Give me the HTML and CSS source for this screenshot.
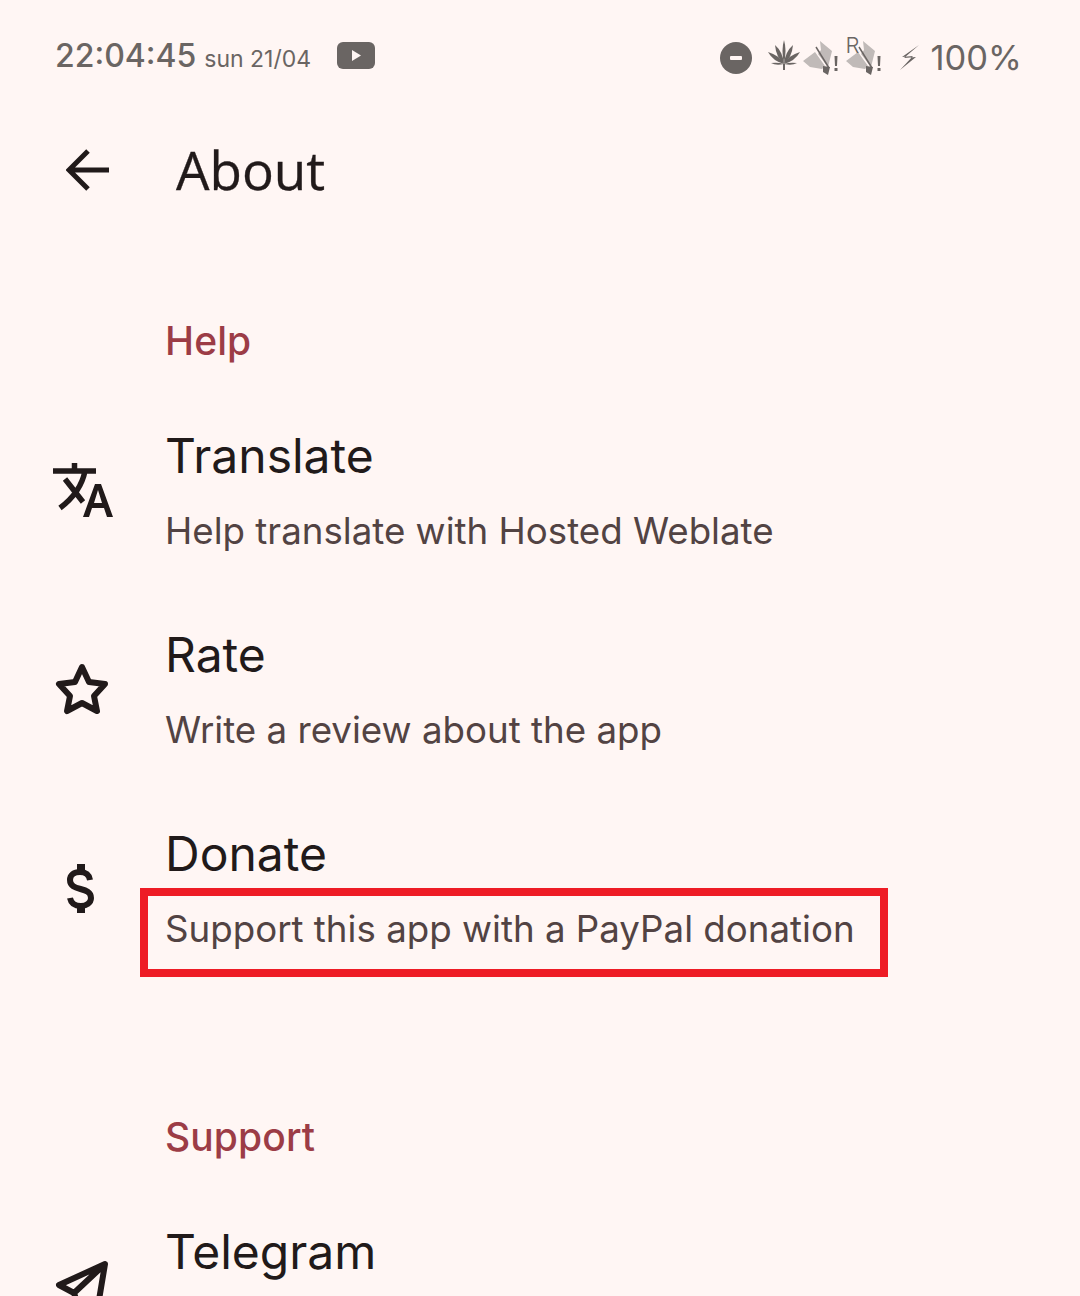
FILE: index.html
```html
<!DOCTYPE html>
<html lang="en">
<head>
<meta charset="utf-8">
<title>About</title>
<link rel="stylesheet" href="styles.css">
</head>
<body>
<div class="screen">
  <header class="status">
    <div class="status-left">
      <span class="clock">22:04:45</span>
      <span class="date">sun 21/04</span>
      <svg class="yt" viewBox="0 0 38 27"><rect width="38" height="27" rx="6" fill="#6a6563"/><path d="M15 8l9 5.500-9 5.500z" fill="#fff6f4"/></svg>
    </div>
    <div class="status-right">
      <svg class="dnd" viewBox="0 0 32 32"><circle cx="16" cy="16" r="16" fill="#6a6563"/><rect x="10" y="14" width="12" height="4" rx="1" fill="#fff6f4"/></svg>
      <svg class="leaf" viewBox="0 0 32 30"><g fill="#6a6563"><path d="M16 24Q13 10 16 0Q19 10 16 24z"/><path d="M16 24Q8 17 7 5Q15 12 16 24z"/><path d="M16 24Q24 17 25 5Q17 12 16 24z"/><path d="M16 24Q5 21 0 12Q11 15 16 24z"/><path d="M16 24Q27 21 32 12Q21 15 16 24z"/><path d="M16 24Q8 26 3 23Q10 22 16 24z"/><path d="M16 24Q24 26 29 23Q22 22 16 24z"/><path d="M15 24h2v6h-2z"/></g></svg>
      <svg class="fly" viewBox="0 0 40 38"><path d="M20 2l12 10-4 16-10-13 3-4zM3 22l12-9 10 14-3 3-12-2z" fill="#c0bab8"/><path d="M16 8l13 21" stroke="#6a6563" stroke-width="1.500" fill="none"/><path d="M23 27l7 1-2 8-5-3z" fill="#6a6563"/><path d="M34.500 17h3l-.5 10h-2zM34.500 29h3v3h-3z" fill="#6a6563"/></svg>
      <span class="roam"><span class="roam-r">R</span><svg class="fly" viewBox="0 0 40 38"><path d="M20 2l12 10-4 16-10-13 3-4zM3 22l12-9 10 14-3 3-12-2z" fill="#c0bab8"/><path d="M16 8l13 21" stroke="#6a6563" stroke-width="1.500" fill="none"/><path d="M23 27l7 1-2 8-5-3z" fill="#6a6563"/><path d="M34.500 17h3l-.5 10h-2zM34.500 29h3v3h-3z" fill="#6a6563"/></svg></span>
      <svg class="bolt" viewBox="0 0 20 27"><path d="M20 1L5 14l12-1L1 26l13-14-11 1z" fill="#6a6563"/></svg>
      <span class="battery">100%</span>
    </div>
  </header>

  <div class="toolbar">
    <svg class="back" viewBox="0 0 44 44"><path d="M43 22H5M22 3L3 22l19 19" fill="none" stroke="#211a1a" stroke-width="5"/></svg>
    <h1 class="title">About</h1>
  </div>

  <section class="section section-help">
    <h2 class="heading">Help</h2>
    <div class="row">
      <svg class="icon" viewBox="0 0 60 56"><path d="M0 9h43M21.500 1v8M32 9C29 24 19 37 7 46M12 17l18 23" fill="none" stroke="#211a1a" stroke-width="5.500"/><path d="M30 55L42 22h6l12 33h-6l-3-9H39l-3 9zM41 41h8l-4-13z" fill="#211a1a" fill-rule="evenodd"/></svg>
      <div class="texts">
        <div class="item-title">Translate</div>
        <div class="item-sub">Help translate with Hosted Weblate</div>
      </div>
    </div>
    <div class="row">
      <svg class="icon" viewBox="0 0 60 56"><path d="M29 6l7 15 16 2-11 12 3 15-15-8-15 8 3-15-11-12 16-2z" fill="none" stroke="#211a1a" stroke-width="6" stroke-linejoin="round"/></svg>
      <div class="texts">
        <div class="item-title">Rate</div>
        <div class="item-sub">Write a review about the app</div>
      </div>
    </div>
    <div class="row">
      <svg class="icon" viewBox="0 0 60 56"><path d="M37 20C36 14 32 12 27 12C21 12 17 15 17 20C17 32 38 26 38 38C38 43 33 46 28 46C22 46 18 43 17 38" fill="none" stroke="#211a1a" stroke-width="6"/><path d="M24 4h8v8h-8zM24 46h8v7h-8z" fill="#211a1a"/></svg>
      <div class="texts">
        <div class="item-title">Donate</div>
        <div class="item-sub">Support this app with a PayPal donation</div>
      </div>
      <div class="highlight"></div>
    </div>
  </section>

  <section class="section section-support">
    <h2 class="heading">Support</h2>
    <div class="row row-single">
      <svg class="icon" viewBox="0 0 60 56"><path d="M52 6L6 27l15 8 6 18 9-10 9 5z M52 6L21 35" fill="none" stroke="#211a1a" stroke-width="6" stroke-linejoin="round"/></svg>
      <div class="texts">
        <div class="item-title">Telegram</div>
      </div>
    </div>
  </section>
</div>
</body>
</html>
```
FILE: styles.css
```css
* { box-sizing: border-box; }
html, body { margin: 0; padding: 0; }
body { background: #fff6f4; font-family: Inter, Roboto, sans-serif; overflow: hidden; }
.screen { width: 1080px; height: 1296px; overflow: hidden; background: #fff6f4; color: #211a1a; }

.status { height: 112px; padding: 0 58px 0 55px; display: flex; justify-content: space-between; align-items: flex-start; color: #6a6563; }
.status-left { display: flex; align-items: baseline; padding-top: 35px; }
.clock { font-size: 32px; line-height: 41px; font-weight: 500; }
.date { font-size: 23px; margin-left: 8px; font-weight: 400; }
.yt { width: 38px; height: 27px; margin-left: 26px; align-self: center; }
.status-right { display: flex; align-items: center; padding-top: 35px; height: 80px; }
.dnd { width: 32px; height: 32px; }
.leaf { width: 32px; height: 30px; margin-left: 16px; margin-top: -6px; }
.fly { width: 40px; height: 38px; display: block; }
.roam { position: relative; margin-left: 3px; }
.roam-r { position: absolute; left: 3px; top: -7px; font-size: 22px; font-weight: 300; }
.bolt { width: 20px; height: 27px; margin-left: 16px; }
.battery { font-size: 34.500px; font-weight: 400; margin-left: 12px; }

.toolbar { height: 118px; display: flex; align-items: center; padding-left: 66px; padding-bottom: 3px; }
.back { width: 44px; height: 44px; }
.title { margin: 0 0 0 66px; font: 400 53px/60px "Open Sans", sans-serif; -webkit-text-stroke: .3px #211a1a; }

.section { padding-left: 53px; }
.section-help { padding-top: 83px; }
.section-support { padding-top: 122px; }
.heading { margin: 0 0 21px 112px; font-size: 39px; line-height: 56px; font-weight: 500; color: #9c3c46; letter-spacing: .1px; }
.row { position: relative; display: flex; align-items: center; height: 199px; }
.icon { width: 60px; height: 56px; flex: none; }
.texts { margin-left: 52px; padding-top: 1px; }
.row-single .texts { padding-top: 0; padding-bottom: 68px; }
.item-title { font-size: 48px; line-height: 60px; }
.item-sub { margin-top: 22px; font-size: 36.700px; line-height: 46px; color: #524343; white-space: nowrap; }
.highlight { position: absolute; left: 87px; top: 100px; width: 748px; height: 89px; border: 8px solid #ee1c25; }
```
